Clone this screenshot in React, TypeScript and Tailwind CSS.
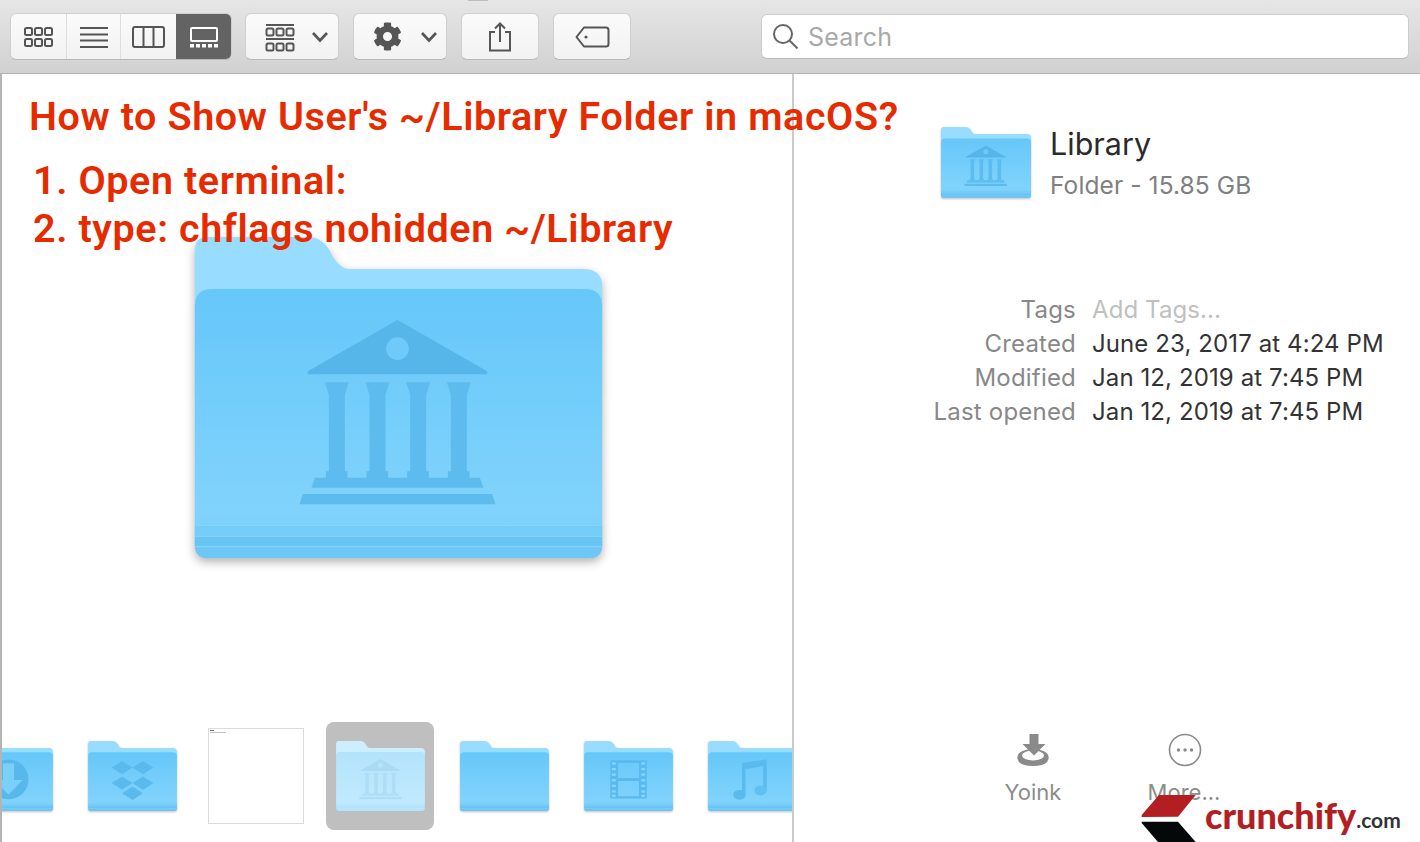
import React from "react";
import { FaCog } from "react-icons/fa";

type Glyph = "none" | "library" | "downloads" | "dropbox" | "film" | "music";

function Temple() {
  const columns = [471, 593, 715, 837];
  return (
    <g fill="#5dbbee">
      <path d="M653 271L922 425V434H384V425Z" fill="#56b5e9" />
      <circle cx="653" cy="357" r="34" fill="#6ecafa" />
      {columns.map((c) => (
        <path
          key={c}
          d={`M${c - 36} 458H${c + 36}L${c + 24} 495V725H${c + 32}V745H${c - 33}V725H${c - 24}V495Z`}
        />
      ))}
      <path d="M405 744H900L911 774H395Z" />
      <path d="M369 793H937L947 824H359Z" />
    </g>
  );
}

function FolderGlyph({ glyph }: { glyph: Glyph }) {
  if (glyph === "library") return <Temple />;
  if (glyph === "downloads")
    return (
      <g>
        <circle cx="656" cy="550" r="275" fill="#58b8ec" />
        <path d="M580 330H732V560H850L656 760L462 560H580Z" fill="#78d0fb" />
      </g>
    );
  if (glyph === "dropbox") {
    const d: [number, number][] = [
      [512, 388],
      [800, 388],
      [512, 601],
      [800, 601],
      [656, 740],
    ];
    return (
      <g fill="#5ab9ed">
        {d.map(([x, y]) => (
          <path key={`${x}-${y}`} d={`M${x} ${y - 92}L${x + 143} ${y}L${x} ${y + 92}L${x - 143} ${y}Z`} />
        ))}
      </g>
    );
  }
  if (glyph === "film") {
    const rows = [315, 392, 469, 546, 623, 700, 760];
    return (
      <g fill="#5ab9ed">
        <path
          fillRule="evenodd"
          d="M406 286H906V814H406ZM513 323V531H800V323ZM513 573V781H800V573Z"
        />
        {rows.map((y) => (
          <g key={y} fill="#85d6fd">
            <rect x="429" y={y} width="51" height="32" />
            <rect x="832" y={y} width="51" height="32" />
          </g>
        ))}
      </g>
    );
  }
  if (glyph === "music")
    return (
      <g fill="#5ab9ed">
        <path d="M513 323L851 272V700H804V365L559 410V763H513Z" />
        <ellipse cx="476" cy="763" rx="85" ry="68" />
        <ellipse cx="767" cy="703" rx="85" ry="68" fill="#62bfef" />
      </g>
    );
  return null;
}

const BACK = "M45 62Q45 22 85 22H385Q425 22 448 60Q475 118 510 118H1210Q1267 118 1267 170V500H45Z";
const FRONT = "M45 230Q45 178 97 178H1215Q1267 178 1267 230V945Q1267 985 1227 985H85Q45 985 45 945Z";

function Folder({
  glyph = "none",
  className = "",
  pale = false,
}: {
  glyph?: Glyph;
  className?: string;
  pale?: boolean;
}) {
  return (
    <svg viewBox="45 22 1222 963" className={className}>
      <defs>
        <linearGradient id="frontFill" x1="0" y1="0" x2="0" y2="1">
          <stop offset="0" stopColor="#66c7f9" />
          <stop offset="0.82" stopColor="#80d3fc" />
          <stop offset="1" stopColor="#76cdf8" />
        </linearGradient>
      </defs>
      <path d={BACK} fill="#98dcff" />
      <path d={FRONT} fill="url(#frontFill)" />
      <path d="M45 885H1267V918H45Z" fill="#74ccf8" />
      <path d="M45 918H1267V950H45Z" fill="#68c4f3" />
      <path d="M45 950H1267V945Q1267 985 1227 985H85Q45 985 45 945Z" fill="#6dc7f5" />
      <path d="M45 885H1267V888H45ZM45 918H1267V921H45ZM45 950H1267V953H45Z" fill="#89d7fb" />
      <FolderGlyph glyph={glyph} />
      {pale && (
        <g fill="#ffffff" fillOpacity="0.5">
          <path d="M45 62Q45 22 85 22H385Q425 22 448 60Q475 118 510 118H1210Q1267 118 1267 170V178H45Z" />
          <path d="M45 178H1267V945Q1267 985 1227 985H85Q45 985 45 945Z" />
        </g>
      )}
    </svg>
  );
}

function Chevron() {
  return (
    <svg width="18" height="12" viewBox="0 0 18 12" fill="none" stroke="#555" strokeWidth="2.6" className="mt-[1px]">
      <path d="M2 2L9 9.5L16 2" />
    </svg>
  );
}

const buttonClass =
  "h-[47px] flex items-center justify-center rounded-[6px] border border-[#cfcfcf] border-b-[#b9b9b9] bg-gradient-to-b from-[#fbfbfb] to-[#f2f2f2]";

function GridRows({ x, y }: { x: number; y: number }) {
  return (
    <g fill="none" stroke="#555" strokeWidth="2">
      {[0, 10, 20].map((dx) => (
        <rect key={dx} x={x + dx} y={y} width="7" height="7" rx="1.5" />
      ))}
    </g>
  );
}

function Toolbar() {
  return (
    <header className="relative h-[74px] shrink-0 flex items-center pl-[10px] bg-gradient-to-b from-[#e6e6e6] to-[#d1d1d1] border-b border-[#b1b1b1]">
      <div className="absolute left-[468px] top-0 h-[1px] w-[20px] bg-[#bdbdbd]" />
      <div className="h-[47px] w-[222px] flex rounded-[6px] overflow-hidden border border-[#cfcfcf] border-b-[#b9b9b9] bg-gradient-to-b from-[#fbfbfb] to-[#f2f2f2]">
        <div className="w-[56px] flex items-center justify-center border-r border-[#dddddd]">
          <svg width="30" height="22" viewBox="0 0 30 22">
            <GridRows x={1} y={2} />
            <GridRows x={1} y={13} />
          </svg>
        </div>
        <div className="w-[54px] flex items-center justify-center border-r border-[#dddddd]">
          <svg width="30" height="22" viewBox="0 0 30 22" stroke="#555" strokeWidth="2">
            <path d="M1 2H29M1 8.5H29M1 14.5H29M1 21H29" />
          </svg>
        </div>
        <div className="w-[55px] flex items-center justify-center">
          <svg width="33" height="22" viewBox="0 0 33 22" fill="none" stroke="#555" strokeWidth="2">
            <rect x="1" y="1" width="31" height="20" rx="2" />
            <path d="M11.5 1V21M21.5 1V21" />
          </svg>
        </div>
        <div className="flex-1 flex items-center justify-center bg-[#636363]">
          <svg width="30" height="22" viewBox="0 0 30 22">
            <rect x="2" y="2" width="26" height="13" rx="1" fill="none" stroke="#fff" strokeWidth="2" />
            <path d="M1 18h4v3.5H1ZM7 18h4v3.5H7ZM13 18h4v3.5h-4ZM19 18h4v3.5h-4ZM25 18h4v3.5h-4Z" fill="#fff" />
          </svg>
        </div>
      </div>
      <div className={`${buttonClass} w-[94px] ml-[13px] !justify-start pl-[19px] gap-[16px]`}>
        <svg width="30" height="28" viewBox="0 0 30 28" className="mt-[2px]">
          <path d="M1 1H29M1 15H29" stroke="#555" strokeWidth="2" />
          <GridRows x={1.5} y={4.5} />
          <GridRows x={1.5} y={19.5} />
        </svg>
        <Chevron />
      </div>
      <div className={`${buttonClass} w-[94px] ml-[14px] !justify-start pl-[19px] gap-[18px]`}>
        <FaCog size={29} color="#555" />
        <Chevron />
      </div>
      <div className={`${buttonClass} w-[78px] ml-[14px]`}>
        <svg width="24" height="30" viewBox="0 0 24 30" fill="none" stroke="#555" strokeWidth="2">
          <path d="M7 10H2V28.5H22V10H17" />
          <path d="M12 20V1.5M7 6.5L12 1.5L17 6.5" />
        </svg>
      </div>
      <div className={`${buttonClass} w-[78px] ml-[14px]`}>
        <svg width="35" height="22" viewBox="0 0 35 22" fill="none" stroke="#555" strokeWidth="2">
          <path d="M9 1.5H31Q33.5 1.5 33.5 4V18Q33.5 20.5 31 20.5H9L1.5 11Z" strokeLinejoin="round" />
          <circle cx="11" cy="11" r="1.6" fill="#555" stroke="none" />
        </svg>
      </div>
      <div className="h-[45px] w-[648px] ml-[130px] flex items-center pl-[10px] rounded-[6px] bg-white border border-[#cdcdcd] border-b-[#b9b9b9]">
        <svg width="27" height="27" viewBox="0 0 27 27" fill="none" stroke="#666" strokeWidth="2">
          <circle cx="11" cy="11" r="9" />
          <path d="M17.5 17.5L25.5 25.5" />
        </svg>
        <span className="ml-[9px] mt-[1px] text-[25px] leading-none tracking-[0.2px] text-[#a9a9a9] font-['Inter',sans-serif]">Search</span>
      </div>
    </header>
  );
}

function Heading() {
  return (
    <div className="relative z-10 h-[163px] pl-[27px] whitespace-nowrap font-['Roboto',sans-serif] font-semibold text-[#e62b00] text-[39.5px] tracking-[0.6px]">
      <h1 className="pt-[18px] leading-[50px] font-semibold">How to Show User's ~/Library Folder in macOS?</h1>
      <p className="pl-[4px] mt-[15px] leading-[48px]">1. Open terminal:</p>
      <p className="pl-[4px] leading-[48px]">2. type: chflags nohidden ~/Library</p>
    </div>
  );
}

function Filmstrip() {
  const folder = "w-[89px] h-[70px] shrink-0 drop-shadow-[0_1px_1px_rgba(0,0,0,0.25)]";
  return (
    <div className="mt-auto mb-[12px] h-[108px] flex items-center overflow-hidden">
      <Folder glyph="downloads" className={`${folder} ml-[-38px]`} />
      <Folder glyph="dropbox" className={`${folder} ml-[35px]`} />
      <div className="w-[96px] h-[96px] ml-[31px] shrink-0 bg-white border border-[#dcdcdc] pl-[1px] pt-[1px]">
        <div className="h-[1px] w-[4px] bg-[#777]" />
        <div className="mt-[1px] h-[1px] w-[16px] bg-[#c4c4c4]" />
      </div>
      <div className="w-[108px] h-[108px] ml-[22px] shrink-0 rounded-[8px] bg-[#bfbfbf] flex items-center justify-center">
        <Folder glyph="library" pale className="w-[89px] h-[70px]" />
      </div>
      <Folder className={`${folder} ml-[26px]`} />
      <Folder glyph="film" className={`${folder} ml-[35px]`} />
      <Folder glyph="music" className={`${folder} ml-[35px]`} />
    </div>
  );
}

function Meta({ label, value, muted }: { label: string; value: string; muted?: boolean }) {
  return (
    <>
      <div className="text-right text-[#888888] tracking-[0.2px]">{label}</div>
      <div className={muted ? "text-[#c0c0c0]" : "text-[#333333]"}>{value}</div>
    </>
  );
}

function Actions() {
  return (
    <div className="mt-auto mb-[36px] ml-[189px] flex gap-[51px] text-[22px] leading-[28px] text-[#8c8c8c]">
      <div className="w-[100px] flex flex-col items-center gap-[10px]">
        <svg width="36" height="36" viewBox="1016 732 36 36">
          <ellipse cx="1034" cy="757" rx="15.5" ry="8" fill="#8a8a8a" />
          <path d="M1018.5 757V759Q1020 766 1034 766Q1048 766 1049.5 759V757Z" fill="#8a8a8a" />
          <ellipse cx="1034" cy="755.5" rx="11" ry="5" fill="#fff" />
          <path d="M1030.5 734H1039.5V744H1046.5L1035 755.5L1023.5 744H1030.5Z" fill="#8a8a8a" />
        </svg>
        <span>Yoink</span>
      </div>
      <div className="w-[100px] flex flex-col items-center gap-[10px]">
        <svg width="36" height="36" viewBox="0 0 36 36" fill="#8a8a8a" className="ml-[2px]">
          <circle cx="18" cy="18" r="15.5" fill="none" stroke="#8a8a8a" strokeWidth="1.6" />
          <circle cx="11.5" cy="18" r="1.7" />
          <circle cx="18" cy="18" r="1.7" />
          <circle cx="24.5" cy="18" r="1.7" />
        </svg>
        <span>More...</span>
      </div>
    </div>
  );
}

function Logo() {
  return (
    <div className="absolute left-[1141px] bottom-0 flex items-start h-[48px]">
      <svg width="56" height="48" viewBox="1141 794 56 48">
        <path d="M1141.7 815L1159 795H1195.7L1178 816.7L1141.7 817Z" fill="#b31e23" />
        <path d="M1141.7 821.7H1178L1195.7 842H1158L1141.7 823Z" fill="#050808" />
      </svg>
      <span className="ml-[8px] text-[36px] leading-[42px] font-black text-[#b31e23] font-['Lato',sans-serif]">crunchify</span>
      <span className="mt-[12px] text-[21px] leading-[28px] font-bold text-[#333] font-['Lato',sans-serif]">.com</span>
    </div>
  );
}

export default function App() {
  return (
    <div className="relative w-[1420px] h-[842px] overflow-hidden bg-white flex flex-col font-['Inter',sans-serif]">
      <Toolbar />
      <main className="flex-1 flex min-h-0">
        <section className="w-[794px] shrink-0 flex flex-col border-l-2 border-l-[#b4b4b4] border-r-2 border-r-[#cacaca]">
          <Heading />
          <Folder
            glyph="library"
            className="relative ml-[192px] w-[409px] h-[321px] shrink-0 drop-shadow-[0_4px_5px_rgba(0,0,0,0.3)]"
          />
          <Filmstrip />
        </section>
        <section className="flex-1 flex flex-col min-w-0">
          <div className="ml-[147px] mt-[53px] flex">
            <Folder glyph="library" className="w-[90px] h-[71px] shrink-0 drop-shadow-[0_1px_1px_rgba(0,0,0,0.25)]" />
            <div className="ml-[19px] -mt-[3px]">
              <div className="text-[30.5px] leading-[40px] text-[#2a2a2a]">Library</div>
              <div className="mt-[4px] text-[24.5px] leading-[34px] tracking-[0.1px] text-[#808080]">Folder - 15.85 GB</div>
            </div>
          </div>
          <div className="mt-[91px] grid grid-cols-[282px_1fr] gap-x-[16px] text-[24px] leading-[34px] tracking-[0.1px]">
            <Meta label="Tags" value="Add Tags..." muted />
            <Meta label="Created" value="June 23, 2017 at 4:24 PM" />
            <Meta label="Modified" value="Jan 12, 2019 at 7:45 PM" />
            <Meta label="Last opened" value="Jan 12, 2019 at 7:45 PM" />
          </div>
          <Actions />
        </section>
      </main>
      <Logo />
    </div>
  );
}
